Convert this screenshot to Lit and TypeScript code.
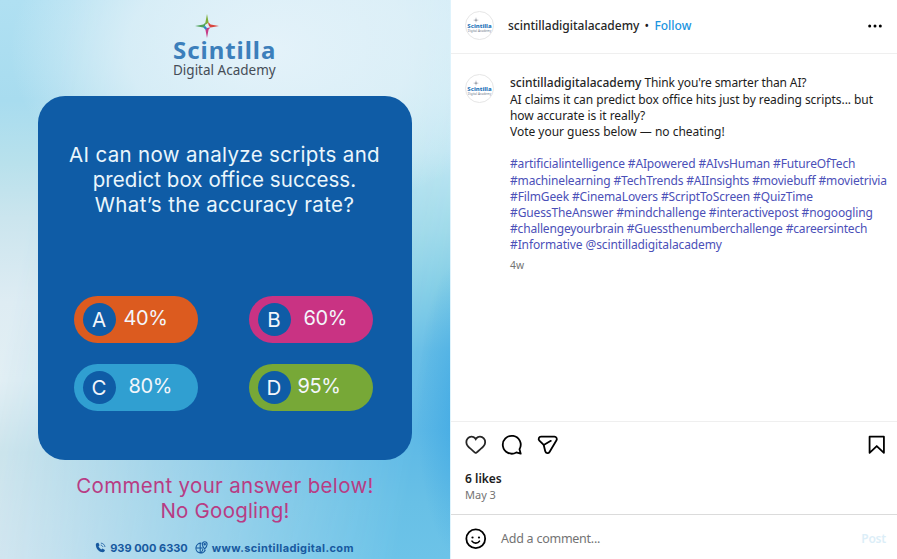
import { LitElement, html, css, svg } from "lit";
import { customElement, property } from "lit/decorators.js";
import { styleMap } from "lit/directives/style-map.js";

interface Line {
  text: string;
  spacing: number; // letter-spacing in px
}

interface Option {
  letter: string;
  value: string;
  color: string;
  gap: number;
}

const QUESTION: Line[] = [
  { text: "AI can now analyze scripts and", spacing: 0.33 },
  { text: "predict box office success.", spacing: 0.06 },
  { text: "What’s the accuracy rate?", spacing: 0.36 },
];

const CALL_TO_ACTION: Line[] = [
  { text: "Comment your answer below!", spacing: 0.32 },
  { text: "No Googling!", spacing: 0.22 },
];

const OPTIONS: Option[] = [
  { letter: "A", value: "40%", color: "#dc5b1f", gap: 8 },
  { letter: "B", value: "60%", color: "#c93383", gap: 13 },
  { letter: "C", value: "80%", color: "#309fd1", gap: 13 },
  { letter: "D", value: "95%", color: "#77a837", gap: 7 },
];

const CAPTION: Line[] = [
  { text: "AI claims it can predict box office hits just by reading scripts... but", spacing: -0.06 },
  { text: "how accurate is it really?", spacing: -0.06 },
  { text: "Vote your guess below — no cheating!", spacing: -0.02 },
];

const TAGS: Line[] = [
  { text: "#artificialintelligence #AIpowered #AIvsHuman #FutureOfTech", spacing: -0.13 },
  { text: "#machinelearning #TechTrends #AIInsights #moviebuff #movietrivia", spacing: -0.16 },
  { text: "#FilmGeek #CinemaLovers #ScriptToScreen #QuizTime", spacing: -0.12 },
  { text: "#GuessTheAnswer #mindchallenge #interactivepost #nogoogling", spacing: -0.12 },
  { text: "#challengeyourbrain #Guessthenumberchallenge #careersintech", spacing: -0.17 },
  { text: "#Informative @scintilladigitalacademy", spacing: -0.11 },
];

const renderLine = (line: Line) =>
  html`<div class="line" style=${styleMap({ letterSpacing: `${line.spacing}px` })}>${line.text}</div>`;

// Four-pointed star, one colour per arm
const star = svg`
  <path d="M12 0 L13.6 8.4 L12 9.8 L9.8 10.8 L10.4 8.4 Z" fill="#7fae3a" />
  <path d="M24 12 L15.6 13.6 L14 12 L13.2 9.6 L13.4 8.2 L15.6 10.4 Z" fill="#d9463e" />
  <path d="M12 24 L10.4 15.6 L12 14 L15.7 13.2 L13.6 15.6 Z" fill="#c63b86" />
  <path d="M0 12 L8.4 10.4 L10.6 8.4 L10 12 L8.4 13.6 Z" fill="#4fa35a" />
  <path d="M8.2 13.2 L10 11.8 L12.2 14.2 L10.5 15.8 Z" fill="#2f86c4" />
`;

@customElement("brand-avatar")
export class BrandAvatar extends LitElement {
  protected render() {
    return html`
      <svg class="star" viewBox="0 0 24 24">
        <path d="M12 0 L13.5 10.5 L24 12 L13.5 13.5 L12 24 L10.5 13.5 L0 12 L10.5 10.5 Z" fill="#6c7380" />
      </svg>
      <div class="name">Scintilla</div>
      <div class="sub">Digital Academy</div>
    `;
  }

  static styles = css`
    :host {
      display: flex;
      flex-direction: column;
      align-items: center;
      box-sizing: border-box;
      width: 29px;
      height: 29px;
      padding-top: 5px;
      border: 1px solid #e6e6e6;
      border-radius: 50%;
      background: #fff;
      overflow: hidden;
      flex: none;
      font-family: "Noto Sans", sans-serif;
      white-space: nowrap;
    }

    .star {
      width: 6px;
      height: 6px;
      margin-left: -7px;
      flex: none;
    }

    .name {
      font-size: 6px;
      line-height: 6px;
      font-weight: 800;
      color: #2473b8;
    }

    .sub {
      font-size: 3.1px;
      line-height: 4px;
      color: #6f7d8c;
    }
  `;
}

@customElement("quiz-option")
export class QuizOption extends LitElement {
  @property({ attribute: false }) public option!: Option;

  protected render() {
    const { letter, value, color, gap } = this.option;
    return html`
      <div class="pill" style=${styleMap({ background: color, gap: `${gap}px` })}>
        <span class="letter">${letter}</span>
        <span class="value">${value}</span>
      </div>
    `;
  }

  static styles = css`
    :host {
      display: block;
    }

    .pill {
      display: flex;
      align-items: center;
      box-sizing: border-box;
      height: 47.5px;
      padding-left: 9px;
      border-radius: 24px;
      font-family: Inter, sans-serif;
      color: #f3f6fb;
    }

    .letter {
      display: grid;
      place-items: center;
      width: 33px;
      height: 33px;
      border-radius: 50%;
      background: #0f5ca6;
      font-size: 20.5px;
      line-height: 33px;
    }

    .value {
      font-size: 20px;
      line-height: 24px;
      padding-bottom: 2px;
      letter-spacing: -0.4px;
    }
  `;
}

@customElement("quiz-poster")
export class QuizPoster extends LitElement {
  protected render() {
    return html`
      <div class="logo">
        <svg class="star" viewBox="0 0 24 24">${star}</svg>
        <div class="brand">Scintilla</div>
        <div class="tagline">Digital Academy</div>
      </div>
      <div class="card">
        <div class="question">${QUESTION.map(renderLine)}</div>
        <div class="options">
          ${OPTIONS.map((option) => html`<quiz-option .option=${option}></quiz-option>`)}
        </div>
      </div>
      <div class="cta">${CALL_TO_ACTION.map(renderLine)}</div>
      <div class="contact">
        <svg class="phone" viewBox="0 0 12 12">
          <path
            d="M2.1 1.2 3.7.9 5 3.6 3.9 4.7C4.4 6 5.5 7.3 6.9 8.1L8.1 7.2 10.8 8.8C10.7 10.2 9.8 11.2 8.6 11.2 4.6 11 1 7.2.9 3.2.9 2.2 1.4 1.5 2.1 1.2Z"
            fill="#17599f"
          />
          <path
            d="M6.3 3.4C7.4 3.5 8.3 4.3 8.6 5.5M6.4 1.2C8.8 1.3 10.6 3.1 10.9 5.4"
            fill="none"
            stroke="#17599f"
            stroke-width="0.9"
          />
        </svg>
        <span class="number">939 000 6330</span>
        <svg class="globe" viewBox="0 0 13 13">
          <g fill="none" stroke="#17599f" stroke-width="1.1">
            <path d="M6.4 2.2A4.9 4.9 0 1 0 10.4 8.8M.9 7H7.8M5.2 2.4V12M5.6 11.9C7.2 10.8 7.9 9.4 8 7.8" />
            <path d="M9.7.8A2.4 2.4 0 0 1 12.1 3.2C12.1 5 9.7 8 9.7 8S7.3 5 7.3 3.2A2.4 2.4 0 0 1 9.7.8Z" />
            <circle cx="9.7" cy="3.2" r="0.7" />
          </g>
        </svg>
        <span class="site">www.scintilladigital.com</span>
      </div>
    `;
  }

  static styles = css`
    :host {
      display: flex;
      flex-direction: column;
      align-items: center;
      box-sizing: border-box;
      position: relative;
      z-index: 0;
      height: 559px;
      overflow: hidden;
      font-family: Inter, "Noto Sans", sans-serif;
      white-space: nowrap;
      background: linear-gradient(180deg, #b0e0f2 0%, #a8dcef 18%, #b8e1ec 29%, #cbe5ee 39%, #deecf3 54%, #e2eff4 68%, #d0e6ed 81%, #dae9f1 100%);
    }

    /* deeper water tones, fading in towards the right edge */
    :host::before {
      content: "";
      position: absolute;
      inset: 0;
      z-index: -1;
      background:
        radial-gradient(ellipse 45px 150px at 462px 410px, rgba(58, 166, 227, 0.75) 0%, rgba(69, 174, 230, 0) 100%),
        linear-gradient(180deg, #d5edf7 0%, #cbebf5 16%, #bfe6f2 27%, #9fdaea 41%, #82cde6 52%, #66bde6 63%, #5db8e6 77%, #68c0e6 90%, #6cc3e8 100%);
      -webkit-mask-image: linear-gradient(100deg, transparent 12%, #000 90%);
      mask-image: linear-gradient(100deg, transparent 12%, #000 90%);
    }

    /* soft white glow behind the logo */
    :host::after {
      content: "";
      position: absolute;
      inset: 0;
      z-index: -1;
      background: radial-gradient(ellipse 260px 170px at 270px 50px, rgba(230, 243, 250, 0.95) 0%, rgba(226, 241, 248, 0.75) 55%, rgba(226, 241, 248, 0) 100%);
    }

    .logo {
      display: flex;
      flex-direction: column;
      height: 95.5px;
      width: 104px;
      flex: none;
    }

    .star {
      width: 24px;
      height: 24px;
      margin: 14px 0 0 22px;
      flex: none;
    }

    .brand {
      font-family: "Noto Sans", sans-serif;
      font-weight: 700;
      font-size: 24px;
      line-height: 24px;
      letter-spacing: 0.95px;
      color: #3c7fbb;
      align-self: flex-start;
    }

    .tagline {
      font-family: "Noto Sans", sans-serif;
      font-size: 13.5px;
      line-height: 17px;
      color: #454d57;
      align-self: flex-start;
    }

    .card {
      display: flex;
      flex-direction: column;
      align-items: center;
      justify-content: space-between;
      box-sizing: border-box;
      width: 374px;
      height: 364px;
      padding: 46px 0 48.5px;
      border-radius: 27px;
      background: #0f5ca6;
      flex: none;
      margin-right: 1px;
    }

    .question {
      font-size: 20.5px;
      line-height: 25.4px;
      color: #eaf6fc;
      text-align: center;
    }

    .options {
      display: grid;
      grid-template-columns: 124px 124px;
      column-gap: 51px;
      row-gap: 20.5px;
      margin-right: 3px;
    }

    .cta {
      margin-top: 13px;
      font-size: 20.5px;
      line-height: 25px;
      color: #b83c84;
      text-align: center;
    }

    .contact {
      display: flex;
      align-items: center;
      margin-top: 17px;
      margin-right: 1px;
      height: 16px;
      font-size: 11px;
      font-weight: 700;
      color: #17599f;
    }

    .site {
      letter-spacing: 0.38px;
    }

    .phone {
      width: 11px;
      height: 11px;
      margin-right: 4px;
    }

    .globe {
      width: 13px;
      height: 13px;
      margin: 0 4px 0 7px;
    }
  `;
}

@customElement("post-details")
export class PostDetails extends LitElement {
  private _renderActions() {
    return html`
      <div class="actions">
        <svg class="icon" viewBox="0 0 24 24">
          <path
            d="M16.792 3.904A4.989 4.989 0 0 1 21.5 9.122c0 3.072-2.652 4.959-5.197 7.222-2.512 2.243-3.865 3.469-4.303 3.752-.477-.309-2.143-1.823-4.303-3.752C5.141 14.072 2.5 12.167 2.5 9.122a4.989 4.989 0 0 1 4.708-5.218 4.21 4.21 0 0 1 3.675 1.941c.84 1.175.98 1.763 1.12 1.763s.278-.588 1.11-1.766a4.17 4.17 0 0 1 3.679-1.938m0-2a6.04 6.04 0 0 0-4.797 2.127 6.052 6.052 0 0 0-4.787-2.127A6.985 6.985 0 0 0 .5 9.122c0 3.61 2.55 5.827 5.015 7.97.283.246.569.494.853.747l1.027.918a44.998 44.998 0 0 0 3.518 3.018 2 2 0 0 0 2.174 0 45.263 45.263 0 0 0 3.626-3.115l.922-.824c.293-.26.59-.519.885-.774 2.334-2.025 4.98-4.32 4.98-7.94a6.985 6.985 0 0 0-6.708-7.218Z"
            fill="#262626"
          />
        </svg>
        <svg class="icon" viewBox="0 0 24 24">
          <path
            d="M20.656 17.008a9.993 9.993 0 1 0-3.59 3.615L22 22Z"
            fill="none"
            stroke="#000"
            stroke-width="2"
            stroke-linejoin="round"
          />
        </svg>
        <svg class="icon" viewBox="0 0 24 24">
          <g fill="none" stroke="#000" stroke-width="2" stroke-linejoin="round" stroke-linecap="round">
            <path d="M13.973 20.046 21.77 6.928C22.8 5.195 21.55 3 19.535 3H4.466C2.138 3 .984 5.825 2.646 7.456l4.842 4.752 1.723 7.121c.548 2.266 3.571 2.721 4.762.717Z" />
            <path d="M7.488 12.208 15.515 7.641" />
          </g>
        </svg>
        <svg class="icon save" viewBox="0 0 24 24">
          <path d="M20 21 12 13.44 4 21V3H20Z" fill="none" stroke="#000" stroke-width="2" stroke-linejoin="round" />
        </svg>
      </div>
    `;
  }

  protected render() {
    return html`
      <header class="header">
        <brand-avatar></brand-avatar>
        <span class="user">scintilladigitalacademy</span>
        <span class="dot">•</span>
        <span class="follow">Follow</span>
        <svg class="more" viewBox="0 0 14 4">
          <circle cx="1.7" cy="2" r="1.5" />
          <circle cx="7" cy="2" r="1.5" />
          <circle cx="12.3" cy="2" r="1.5" />
        </svg>
      </header>
      <section class="caption">
        <brand-avatar></brand-avatar>
        <div class="text">
          <div class="line"><span class="user">scintilladigitalacademy</span> <span class="lead">Think you're smarter than AI?</span></div>
          ${CAPTION.map(renderLine)}
          <div class="tags">${TAGS.map(renderLine)}</div>
          <div class="age">4w</div>
        </div>
      </section>
      <section class="summary">
        ${this._renderActions()}
        <div class="likes">6 likes</div>
        <div class="date">May 3</div>
      </section>
      <footer class="composer">
        <svg class="icon" viewBox="0 0 24 24">
          <circle cx="12" cy="12" r="10.5" fill="none" stroke="#000" stroke-width="2" />
          <circle cx="8.4" cy="10.6" r="1.25" />
          <circle cx="15.6" cy="10.6" r="1.25" />
          <path d="M7.8 14.6C9.8 17.6 14.2 17.6 16.2 14.6" fill="none" stroke="#000" stroke-width="1.8" stroke-linecap="round" />
        </svg>
        <span class="placeholder">Add a comment...</span>
        <span class="post">Post</span>
      </footer>
    `;
  }

  static styles = css`
    :host {
      display: flex;
      flex-direction: column;
      box-sizing: border-box;
      height: 559px;
      border-left: 1px solid #dff3fc;
      background: #fff;
      font-family: "Noto Sans", sans-serif;
      font-size: 12px;
      line-height: 16.2px;
      color: #1c1c1c;
      white-space: nowrap;
    }

    .header {
      display: flex;
      align-items: center;
      box-sizing: border-box;
      height: 54px;
      padding: 0 15px 2px 14px;
      border-bottom: 1px solid #efefef;
      flex: none;
    }

    .header .user {
      margin-left: 14px;
    }

    .header .user,
    .header .dot,
    .header .follow {
      padding-top: 1.5px;
    }

    .user {
      font-weight: 500;
      color: #262626;
    }

    .dot {
      margin: 0 5.5px 0 5px;
    }

    .follow {
      font-weight: 500;
      color: #1a94e0;
    }

    .more {
      width: 14px;
      height: 4px;
      margin-left: auto;
    }

    .caption {
      display: flex;
      flex: 1;
      gap: 16px;
      padding: 20px 0 0 14px;
    }

    .text {
      padding-top: 1.35px;
    }

    .lead {
      letter-spacing: -0.13px;
    }

    .tags {
      margin-top: 16.2px;
      color: #4b50b8;
    }

    .age {
      margin-top: 4px;
      font-size: 10.3px;
      line-height: 15px;
      color: #737373;
    }

    .summary {
      box-sizing: border-box;
      height: 93px;
      padding: 12px 10px 0 14px;
      border-top: 1px solid #efefef;
      flex: none;
    }

    .actions {
      display: flex;
      gap: 14.5px;
    }

    .icon {
      width: 21.5px;
      height: 21.5px;
      flex: none;
    }

    .save {
      margin-left: auto;
    }

    .likes {
      margin-top: 15px;
      font-weight: 600;
    }

    .date {
      font-size: 11px;
      color: #737373;
    }

    .composer {
      display: flex;
      align-items: center;
      box-sizing: border-box;
      height: 45px;
      padding: 4px 11px 0 14px;
      border-top: 1px solid #dbdbdb;
      flex: none;
    }

    .placeholder {
      margin-left: 14.5px;
      padding-top: 1px;
      font-size: 12.5px;
      letter-spacing: -0.25px;
      color: #737373;
    }

    .post {
      margin-left: auto;
      padding-top: 1px;
      font-weight: 600;
      letter-spacing: -0.2px;
      color: #dceef8;
    }
  `;
}

@customElement("app-root")
export class AppRoot extends LitElement {
  protected render() {
    return html`
      <quiz-poster></quiz-poster>
      <post-details></post-details>
    `;
  }

  static styles = css`
    :host {
      display: grid;
      grid-template-columns: 450px 447px;
      width: 897px;
      height: 559px;
      overflow: hidden;
      background: #fff;
    }
  `;
}
